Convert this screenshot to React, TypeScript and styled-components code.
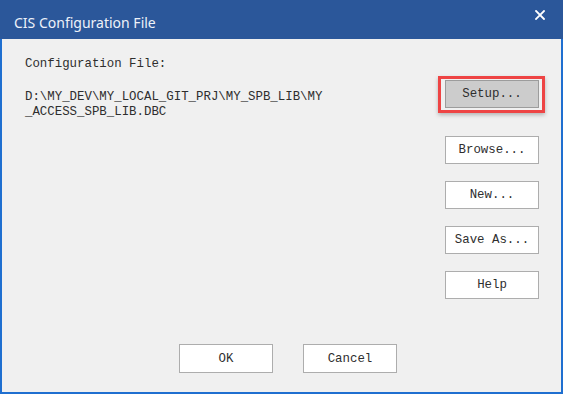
import styled, { createGlobalStyle } from "styled-components";

const GlobalStyle = createGlobalStyle`
  html, body {
    margin: 0;
    padding: 0;
    background: #f0f0f0;
  }
  * {
    box-sizing: border-box;
  }
`;

const Window = styled.div`
  width: 563px;
  height: 394px;
  display: flex;
  flex-direction: column;
  background: #f0f0f0;
  border: 2px solid #1f6fd0;
  border-top: none;
  font-family: "Liberation Mono", "DejaVu Sans Mono", monospace;
  font-size: 12.4px;
  color: #2e2e2e;
`;

const TitleBar = styled.div`
  height: 39px;
  margin: 0 -2px;
  padding: 0 18px 0 14px;
  display: flex;
  align-items: flex-start;
  justify-content: space-between;
  background: #2b579a;
  color: #eef2f9;
`;

const Title = styled.span`
  margin-top: 13px;
  font-family: "Noto Sans", "Open Sans", sans-serif;
  font-size: 14px;
  line-height: 20px;
`;

const CloseIcon = styled.svg`
  margin-top: 10px;
  width: 10px;
  height: 10px;
`;

const Body = styled.div`
  flex: 1;
  display: flex;
  justify-content: space-between;
  padding: 0 22px 0 23px;
`;

const InfoColumn = styled.div`
  padding-top: 18px;
  display: flex;
  flex-direction: column;
  gap: 18px;
`;

const Label = styled.div`
  line-height: 15px;
`;

const Path = styled.div`
  width: 301px;
  line-height: 15px;
  word-break: break-all;
`;

const ButtonColumn = styled.div`
  padding-top: 41px;
  display: flex;
  flex-direction: column;
  gap: 17px;
`;

const Button = styled.button<{ $active?: boolean }>`
  position: relative;
  width: 94px;
  height: 28px;
  padding: 0;
  border: 1px solid ${({ $active }) => ($active ? "#9c9c9c" : "#adadad")};
  background: ${({ $active }) => ($active ? "#cccccc" : "#ffffff")};
  font-family: inherit;
  font-size: inherit;
  color: #2e2e2e;
  margin-bottom: ${({ $active }) => ($active ? "11px" : "0")};
`;

const Highlight = styled.span`
  position: absolute;
  top: -5px;
  right: -7px;
  bottom: -6px;
  left: -8px;
  border: 3px solid #ee4444;
  box-shadow: 0 2px 4px rgba(0, 0, 0, 0.25);
  pointer-events: none;
`;

const Footer = styled.div`
  display: flex;
  gap: 30px;
  padding: 0 0 19px 177px;
`;

const FooterButton = styled(Button)`
  height: 29px;
`;

export default function App() {
  return (
    <>
      <GlobalStyle />
      <Window>
        <TitleBar>
          <Title>CIS Configuration File</Title>
          <CloseIcon viewBox="0 0 10 10">
            <path
              d="M1 1 L9 9 M9 1 L1 9"
              stroke="#ffffff"
              strokeWidth="1.8"
              strokeLinecap="square"
            />
          </CloseIcon>
        </TitleBar>
        <Body>
          <InfoColumn>
            <Label>Configuration File:</Label>
            <Path>D:\MY_DEV\MY_LOCAL_GIT_PRJ\MY_SPB_LIB\MY_ACCESS_SPB_LIB.DBC</Path>
          </InfoColumn>
          <ButtonColumn>
            <Button $active>
              Setup...
              <Highlight />
            </Button>
            <Button>Browse...</Button>
            <Button>New...</Button>
            <Button>Save As...</Button>
            <Button>Help</Button>
          </ButtonColumn>
        </Body>
        <Footer>
          <FooterButton>OK</FooterButton>
          <FooterButton>Cancel</FooterButton>
        </Footer>
      </Window>
    </>
  );
}
